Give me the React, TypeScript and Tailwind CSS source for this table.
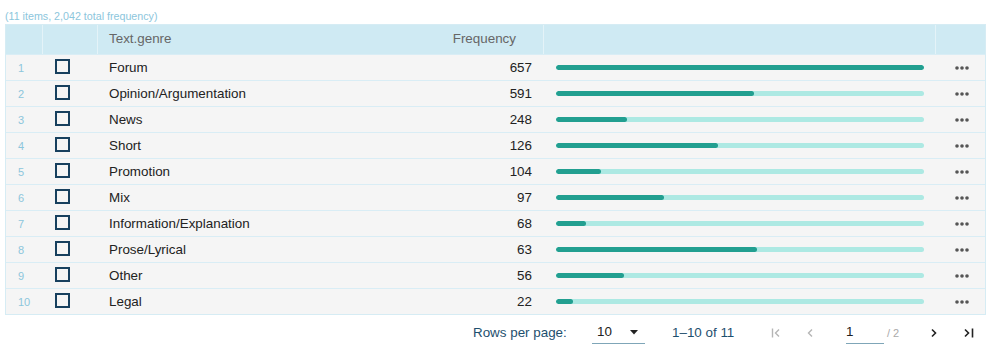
import React from 'react';

const rows = [
  { genre: 'Forum', freq: 657, bar: 1 },
  { genre: 'Opinion/Argumentation', freq: 591, bar: 0.537 },
  { genre: 'News', freq: 248, bar: 0.193 },
  { genre: 'Short', freq: 126, bar: 0.441 },
  { genre: 'Promotion', freq: 104, bar: 0.123 },
  { genre: 'Mix', freq: 97, bar: 0.294 },
  { genre: 'Information/Explanation', freq: 68, bar: 0.082 },
  { genre: 'Prose/Lyrical', freq: 63, bar: 0.545 },
  { genre: 'Other', freq: 56, bar: 0.185 },
  { genre: 'Legal', freq: 22, bar: 0.046 },
];

const cols = 'grid grid-cols-[37px_55px_303px_143px_392px_1fr]';

const Dots = () => (
  <svg width="14" height="4" viewBox="0 0 14 4" fill="#555">
    <circle cx="2" cy="2" r="1.8" />
    <circle cx="7" cy="2" r="1.8" />
    <circle cx="12" cy="2" r="1.8" />
  </svg>
);

export default function App() {
  return (
    <div className="w-[1000px] h-[363px] bg-white font-['Liberation_Sans',Arial,sans-serif] pt-[9px]">
      <div className="pl-[5px] text-[10.7px] leading-[14px] text-[#8cc6dc]">(11 items, 2,042 total frequency)</div>

      <div className="ml-[5px] mt-px w-[981px] border border-[#d6ecf4]">
        {/* header */}
        <div className={`${cols} h-[29px] bg-[#cfeaf3] text-[13.4px] text-[#666]`}>
          <div className="border-r border-[#e4f3f8]" />
          <div className="border-r border-[#e4f3f8]" />
          <div className="flex items-center pl-[11px]">Text.genre</div>
          <div className="flex items-center justify-end pr-[27px] border-r border-[#e4f3f8]">Frequency</div>
          <div className="border-r border-[#e4f3f8]" />
          <div />
        </div>

        {rows.map((r, i) => (
          <div key={r.genre} className={`${cols} h-[26px] bg-[#f5f5f5] border-t border-[#d9edf5] text-[13.4px] text-[#222]`}>
            <div className="flex items-center pt-px pl-[12px] text-[11px] text-[#8cc6dc]">{i + 1}</div>
            <div className="flex items-center pl-[12px]">
              <div className="w-[15px] h-[15px] border-2 border-[#17405e] -mt-[3px]" />
            </div>
            <div className="flex items-center pt-px pl-[11px]">{r.genre}</div>
            <div className="flex items-center pt-px justify-end pr-[12px]">{r.freq}</div>
            <div className="flex items-center px-[12px]">
              <div className="w-full h-[5px] rounded-full bg-[#ade9e3] overflow-hidden">
                <div className="h-full rounded-full bg-[#229f90]" style={{ width: `${r.bar * 100}%` }} />
              </div>
            </div>
            <div className="flex items-center justify-center pl-[2px]">
              <Dots />
            </div>
          </div>
        ))}
      </div>

      <div className="flex items-center h-[36px] pl-[473px] text-[13.4px] text-[#1d4f6e]">
        <span className="w-[119px]">Rows per page:</span>
        <div className="w-[53px] h-[22px] flex items-center justify-between border-b border-[#7fa6b8] pl-[5px] pr-[7px] text-[#222]">
          <span>10</span>
          <svg width="8" height="5" viewBox="0 0 8 5"><path d="M0 0h8L4 4.5z" fill="#222" /></svg>
        </div>
        <span className="ml-[27px] w-[98px]">1–10 of 11</span>
        <div className="w-[12px] flex justify-center text-[#b5b5b5]">
          <svg width="12" height="12" viewBox="0 0 12 12" fill="none" stroke="currentColor" strokeWidth="1.4">
            <path d="M2.5 1.5v9M9 2.5L5.5 6 9 9.5" />
          </svg>
        </div>
        <div className="ml-[22px] w-[12px] flex justify-center text-[#b5b5b5]">
          <svg width="12" height="12" viewBox="0 0 12 12" fill="none" stroke="currentColor" strokeWidth="1.4">
            <path d="M8 2.5L4.5 6 8 9.5" />
          </svg>
        </div>
        <div className="ml-[30px] w-[38px] h-[22px] flex items-center border-b border-[#7fa6b8] text-[#222]">1</div>
        <span className="ml-[3px] w-[14px] text-[11px] text-[#aaa]">/ 2</span>
        <div className="ml-[27px] w-[12px] flex justify-center text-[#222]">
          <svg width="12" height="12" viewBox="0 0 12 12" fill="none" stroke="currentColor" strokeWidth="1.6">
            <path d="M4 2.5L7.5 6 4 9.5" />
          </svg>
        </div>
        <div className="ml-[23px] w-[12px] flex justify-center text-[#222]">
          <svg width="12" height="12" viewBox="0 0 12 12" fill="none" stroke="currentColor" strokeWidth="1.6">
            <path d="M2 2.5L5.5 6 2 9.5M9.5 1.5v9" />
          </svg>
        </div>
      </div>
    </div>
  );
}
